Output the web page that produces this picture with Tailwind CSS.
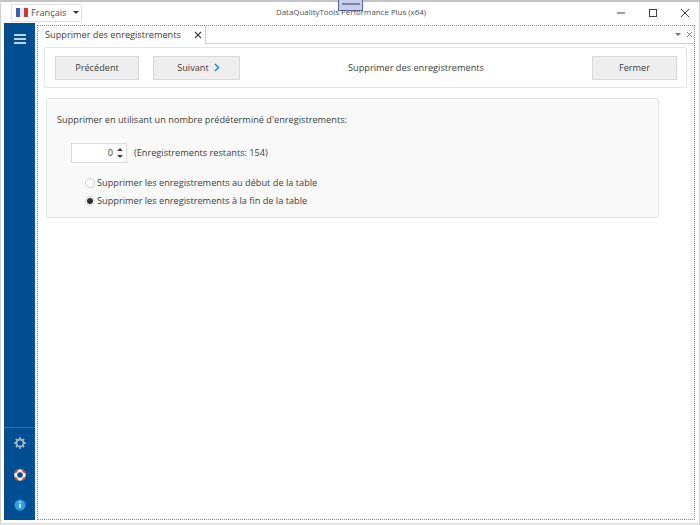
<!DOCTYPE html>
<html lang="fr">
<head>
<meta charset="UTF-8" />
<title>DataQualityTools Performance Plus (x64)</title>
<script src="https://cdn.jsdelivr.net/npm/@tailwindcss/browser@4"></script>
</head>
<body>
<div class="relative flex h-[525px] w-[700px] flex-col border-x border-b-2 border-t-2 border-x-[#d0d0d0] border-b-[#e4e4e4] border-t-[#c4c4c4] bg-white font-['Open_Sans',sans-serif] text-[9.2px] text-[#404040]">

  <!-- docking handle -->
  <div class="absolute -top-[2px] left-[337px] flex h-[11px] w-[25px] justify-center border border-t-0 border-[#5a62a8] bg-[#c9cfe8] pt-[3px]">
    <div class="h-[2px] w-[18px] bg-[#7d84a8]"></div>
  </div>

  <!-- title bar -->
  <div class="relative flex h-[21px] shrink-0 items-center">
    <div class="ml-[10px] flex h-[18px] w-[71px] items-center border border-[#e2e2e2] pl-[4px]">
      <svg class="mr-[3px]" width="12" height="9" viewBox="0 0 12 9"><rect width="4" height="9" fill="#3a5fb0"/><rect x="4" width="4" height="9" fill="#e8e8f0"/><rect x="8" width="4" height="9" fill="#d8382c"/></svg>
      <span class="text-[#505050]">Français</span>
      <span class="ml-auto mr-[2px] h-0 w-0 border-x-[3px] border-t-[3px] border-x-transparent border-t-[#303030]"></span>
    </div>
    <div class="absolute left-[275px] top-[5px] text-[7.9px] text-[#505050]">DataQualityTools Performance Plus (x64)</div>
    <div class="ml-auto flex items-center gap-[22px] pr-[9px]">
      <svg width="11" height="11" viewBox="0 0 11 11"><path d="M2 6h8" stroke="#404040" fill="none"/></svg>
      <svg width="10" height="10" viewBox="0 0 10 10"><rect x="1.5" y="1.5" width="7" height="7" stroke="#404040" fill="none"/></svg>
      <svg width="10" height="10" viewBox="0 0 10 10"><path d="M1 1l8 8M9 1l-8 8" stroke="#404040" fill="none"/></svg>
    </div>
  </div>

  <!-- body -->
  <div class="flex min-h-0 flex-1 pb-[3px] pl-[3px] pr-[4px]">
    <aside class="flex w-[31px] shrink-0 flex-col items-center bg-[#004e92] pb-[9px]">
      <svg class="mt-[11px]" width="12" height="10" viewBox="0 0 12 10"><path d="M0 1h12M0 5h12M0 9h12" stroke="#fff" stroke-width="1.4"/></svg>
      <div class="mt-auto flex w-full flex-col items-center gap-[18px] border-t border-[#2a74b4] pt-[9px]">
        <svg class="mb-[2px]" width="12" height="12" viewBox="0 0 12 12"><circle cx="6" cy="6" r="3.6" fill="none" stroke="#a8b4bf" stroke-width="2"/><path d="M6 0v2.5M6 9.500V12M0 6h2.500M9.500 6H12M1.800 1.800l1.800 1.800M8.400 8.400l1.800 1.800M10.200 1.800L8.400 3.600M3.600 8.400l-1.800 1.800" stroke="#a8b4bf" stroke-width="1.500"/></svg>
        <svg width="12" height="12" viewBox="0 0 12 12"><circle cx="6" cy="6" r="4.300" fill="none" stroke="#f4f0ec" stroke-width="3"/><path d="M3 3L1.500 1.500M9 3l1.500-1.500M3 9l-1.500 1.500M9 9l1.500 1.500" stroke="#e8432e" stroke-width="3.400"/></svg>
        <svg width="12" height="12" viewBox="0 0 12 12"><circle cx="6" cy="6" r="5.500" fill="#2e9ee8"/><path d="M6 5v4" stroke="#fff" stroke-width="1.500"/><circle cx="6" cy="3.300" r="0.900" fill="#fff"/></svg>
      </div>
    </aside>

    <main class="ml-[2px] mt-[2px] flex min-w-0 flex-1 flex-col border border-dotted border-[#8a8a8a]">
      <!-- tab strip -->
      <div class="flex h-[18px] shrink-0 items-stretch">
        <div class="flex w-[168px] items-center border-r border-[#d0d0d0] pl-[7px] pr-[3px] text-[#404040]">
          <span class="whitespace-nowrap">Supprimer des enregistrements</span>
          <svg class="ml-auto" width="8" height="8" viewBox="0 0 8 8"><path d="M1 1l6 6M7 1L1 7" stroke="#404040" stroke-width="1.200" fill="none"/></svg>
        </div>
        <div class="flex flex-1 items-center justify-end gap-[5px] border-b border-[#d0d0d0] pr-[1px]">
          <span class="h-0 w-0 border-x-[3px] border-t-[3px] border-x-transparent border-t-[#707070]"></span>
          <svg width="7" height="7" viewBox="0 0 7 7"><path d="M1 1l5 5M6 1L1 6" stroke="#808080" fill="none"/></svg>
        </div>
      </div>

      <!-- toolbar -->
      <div class="ml-[6px] mr-[7px] mt-[3px] flex h-[41px] items-center rounded-[2px] border border-[#e4e4e4] pl-[10px] pr-[9px]">
        <button class="h-[24px] w-[84px] border border-[#d8d8d8] bg-[#eeeeee] text-[#404040]">Précédent</button>
        <button class="ml-[14px] flex h-[24px] w-[87px] items-center justify-center gap-[5px] border border-[#d8d8d8] bg-[#eeeeee] pl-[4px] text-[#404040]">
          Suivant
          <svg width="6" height="9" viewBox="0 0 6 9"><path d="M1 1l3.500 3.500L1 8" stroke="#1d8fe0" stroke-width="1.600" fill="none"/></svg>
        </button>
        <div class="flex-1 text-center">Supprimer des enregistrements</div>
        <button class="h-[24px] w-[85px] border border-[#d8d8d8] bg-[#eeeeee] text-[#404040]">Fermer</button>
      </div>

      <!-- options card -->
      <div class="ml-[8px] mr-[35px] mt-[10px] h-[120px] rounded-[2px] border border-[#e4e4e4] bg-[#f9f9f9] pl-[10px] pt-[14px]">
        <p>Supprimer en utilisant un nombre prédéterminé d'enregistrements:</p>
        <div class="ml-[14px] mt-[16px] flex items-center">
          <div class="flex h-[20px] w-[56px] items-center justify-end border border-[#dcdcdc] bg-white pr-[3px]">
            <span class="mr-[4px]">0</span>
            <div class="flex flex-col gap-[4px]">
              <span class="h-0 w-0 border-x-[3px] border-b-[3px] border-x-transparent border-b-[#404040]"></span>
              <span class="h-0 w-0 border-x-[3px] border-t-[3px] border-x-transparent border-t-[#404040]"></span>
            </div>
          </div>
          <span class="ml-[7px]">(Enregistrements restants: 154)</span>
        </div>
        <div class="ml-[28px] mt-[13px] flex flex-col gap-[4px]">
          <label class="flex h-[14px] items-center gap-[2px]">
            <span class="h-[10px] w-[10px] rounded-full border border-[#d0d0d0] bg-white"></span>
            Supprimer les enregistrements au début de la table
          </label>
          <label class="flex h-[14px] items-center gap-[2px]">
            <span class="flex h-[10px] w-[10px] items-center justify-center rounded-full border border-[#d0d0d0] bg-white">
              <span class="h-[6px] w-[6px] rounded-full bg-[#303030]"></span>
            </span>
            Supprimer les enregistrements à la fin de la table
          </label>
        </div>
      </div>
    </main>
  </div>
</div>
</body>
</html>
